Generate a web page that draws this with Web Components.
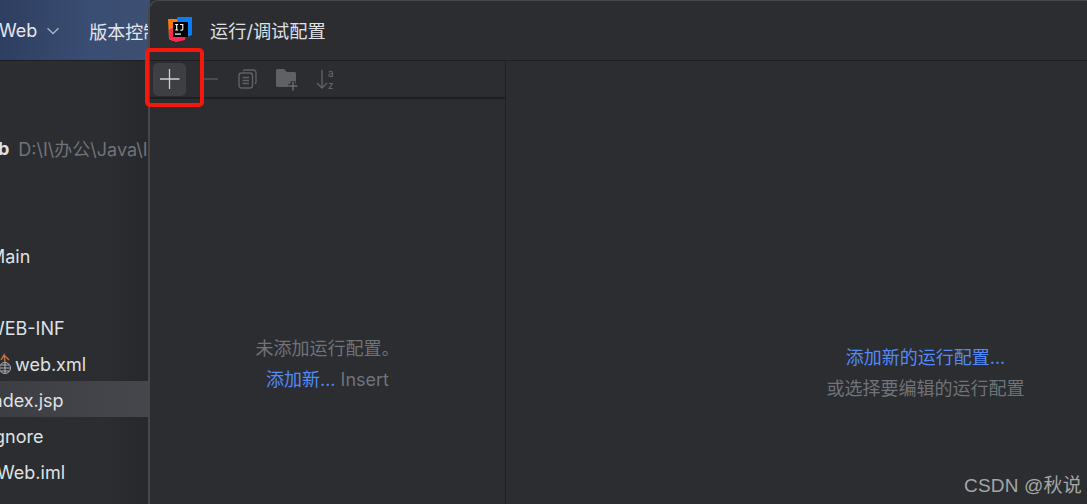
<!DOCTYPE html>
<html lang="zh">
<head>
<meta charset="utf-8">
<style>
html,body{margin:0;padding:0;background:#2b2d30;}
body{width:1087px;height:504px;overflow:hidden;position:relative;font-family:"Inter","Noto Sans CJK SC",sans-serif;}
</style>
</head>
<body>
<ide-back></ide-back>
<run-dialog></run-dialog>
<red-mark></red-mark>
<water-mark>CSDN @秋说</water-mark>
<script>
const FONT='"Inter","Noto Sans CJK SC",sans-serif';
class Base extends HTMLElement{
  constructor(){super();this.attachShadow({mode:'open'}).innerHTML=this.constructor.html;}
}
class IdeRow extends Base{
  static html=`<style>
  :host{display:flex;align-items:center;height:36px;box-sizing:border-box;padding-top:2px;color:#dfe1e5;font:18px ${FONT};white-space:nowrap;overflow:hidden;}
  :host([selected]){background:linear-gradient(90deg,#3c3e43,#45474c);}
  </style><slot></slot>`;
}
class IdeBack extends Base{
  static html=`<style>
  :host{display:flex;flex-direction:column;position:absolute;inset:0;background:#2b2d30;}
  .top{height:61px;flex:none;display:flex;align-items:center;background:linear-gradient(90deg,#2d3e60 0%,#3a4d72 60%,#3d4f72 100%);border-bottom:1px solid #1e1f22;box-sizing:border-box;color:#e4e7ed;font:18px ${FONT};white-space:nowrap;overflow:hidden;width:150px;padding-top:1px;}
  .web{margin-left:-1px;}
  svg.chev{margin-left:9px;flex:none;}
  .vc{margin-left:29px;}
  .side{width:149px;flex:1;padding-top:32px;box-sizing:border-box;display:flex;flex-direction:column;background:linear-gradient(90deg,#2b2d30 70%,#27282b 100%);}
  .path{color:#6f737a;margin-left:9px;}
  b{font-weight:700;margin-left:-2px}
  .m{margin-left:-11px}.wi{margin-left:-13px}.w2{margin-left:-3px}.i{margin-left:-8px}.g{margin-left:-6px}
  .x{margin-left:15px}
  svg.ic{flex:none;margin-right:-16px}
  </style>
  <div class="top"><span class="web">Web</span>
    <svg class="chev" width="14" height="8" viewBox="0 0 14 8"><path d="M1.500 1.200 7 6.600l5.500-5.400" fill="none" stroke="#aab2c4" stroke-width="1.400"/></svg>
    <span class="vc">版本控制</span></div>
  <div class="side">
    <ide-row></ide-row>
    <ide-row><b>b</b><span class="path">D:\\I\\办公\\Java\\IDEA</span></ide-row>
    <ide-row></ide-row><ide-row></ide-row>
    <ide-row><span class="m">Main</span></ide-row>
    <ide-row></ide-row>
    <ide-row><span class="wi">WEB-INF</span></ide-row>
    <ide-row>
      <svg class="ic" width="16" height="24" viewBox="0 0 16 24"><path d="M1 8 4 3l1 7M4 3l5 5" fill="none" stroke="#c9743c" stroke-width="1.400"/><circle cx="5" cy="16" r="6" fill="#2b2d30"/><circle cx="5" cy="16" r="5.500" fill="none" stroke="#aeb1b6"/><path d="M0 16h10M5 11v10M1 13h8M1 19h8" stroke="#aeb1b6"/></svg>
      <span class="x">web.xml</span></ide-row>
    <ide-row selected><span class="i">ndex.jsp</span></ide-row>
    <ide-row><span class="g">gnore</span></ide-row>
    <ide-row><span class="w2">Web.iml</span></ide-row>
  </div>`;
}
class RunDialog extends Base{
  static html=`<style>
  :host{display:flex;flex-direction:column;position:absolute;left:148px;top:0;right:0;bottom:0;background:#2b2d30;border-left:2px solid #45474b;border-top:1px solid #45474b;border-top-left-radius:10px;box-sizing:border-box;color:#dfe1e5;font:18px ${FONT};}
  .title{height:60px;flex:none;display:flex;align-items:center;gap:18px;padding-left:18px;border-bottom:1px solid #1e1f22;box-sizing:border-box;}
  .title svg{margin-top:-3px}
  .title span{margin-top:-2px;font-size:18.200px}
  .body{flex:1;display:flex;min-height:0;}
  .left{width:355px;flex:none;border-right:1px solid #1e1f22;display:flex;flex-direction:column;}
  .tools{height:38px;flex:none;box-sizing:border-box;border-bottom:2px solid #1e1f22;display:flex;align-items:center;padding-left:3px;}
  .btn{width:33px;height:33px;border-radius:5px;display:flex;align-items:center;justify-content:center;flex:none;}
  .btn.on{background:#3d3f43;margin-right:17px;}
  .tools svg{display:block;flex:none}
  .empty{flex:1;display:flex;flex-direction:column;align-items:center;padding-top:234px;color:#6f737a;line-height:31px;}
  .right{flex:1;display:flex;flex-direction:column;align-items:center;padding-top:281px;padding-left:258px;color:#6f737a;line-height:31px;}
  a{color:#548af7;text-decoration:none;}
  </style>
  <div class="title">
    <svg width="24" height="25" viewBox="0 0 24 25">
      <path d="M0 2h11l-1 19-5 3-4-2z" fill="#f97a12"/>
      <path d="M9 0h15v18l-5 2-9-4z" fill="#087cfa"/>
      <path d="M1 13l3-2 14 7-1 5-9 2-7-3z" fill="#fe2857"/>
      <rect x="5" y="5" width="15" height="15" fill="#000"/>
      <rect x="7" y="16.500" width="6" height="1.200" fill="#fff"/>
      <path d="M7.200 7.500h3M8.700 7.500v5.500M7.200 13h3M12 7.500h2.800v4.600c0 1-.7 1.200-2.400 1" fill="none" stroke="#fff" stroke-width="1.100"/>
    </svg>
    <span>运行/调试配置</span>
  </div>
  <div class="body">
    <div class="left">
      <div class="tools">
        <div class="btn on"><svg width="20" height="20" viewBox="0 0 20 20"><path d="M9.500 0v20M-.5 10h20" stroke="#ced0d6" stroke-width="1.300"/></svg></div>
        <svg width="15" height="16" viewBox="0 0 15 16" style="margin-right:20px"><path d="M0 8h15" stroke="#57595d" stroke-width="1.400"/></svg>
        <svg width="19" height="20" viewBox="0 0 19 20" style="margin-right:18px"><rect x="1" y="4" width="13.500" height="15" rx="2.500" fill="none" stroke="#5f6166" stroke-width="1.400"/><path d="M5 2.200C5.500 1.400 6 1 7 1h8c1.700 0 3 1.300 3 3v9c0 1-.4 1.600-1.200 2" fill="none" stroke="#5f6166" stroke-width="1.300"/><path d="M4.500 8.500h6.500M4.500 11.500h6.500M4.500 14.500h6.500" stroke="#5f6166" stroke-width="1.300"/></svg>
        <svg width="24" height="24" viewBox="0 0 24 24" style="margin-right:17px"><path d="M1 3.500C1 2.700 1.700 2 2.500 2H9l3 3h7.500c.8 0 1.500.7 1.500 1.500V20H2.500C1.700 20 1 19.300 1 18.500z" fill="#5f6166"/><path d="M18 14v9.500M13.500 19h9" stroke="#2b2d30" stroke-width="4.500"/><path d="M18 14.500v9M13.500 19h9" stroke="#6a6c71" stroke-width="1.500"/></svg>
        <svg width="20" height="22" viewBox="0 0 20 22"><path d="M6 2v18M1 15l5 5 5-5" fill="none" stroke="#5f6166" stroke-width="1.400"/><text x="12" y="8.500" font-size="9.900" fill="#6a6c71" font-family="Inter">a</text><text x="12" y="20.500" font-size="9.900" fill="#6a6c71" font-family="Inter">z</text></svg>
      </div>
      <div class="empty"><div>未添加运行配置。</div><div><a>添加新...</a> Insert</div></div>
    </div>
    <div class="right"><a>添加新的运行配置...</a><div>或选择要编辑的运行配置</div></div>
  </div>`;
}
class RedMark extends Base{
  static html=`<style>:host{display:block;position:absolute;left:145px;top:48px;width:59px;height:59px;box-sizing:border-box;border:4px solid #f5190d;border-radius:5px;}</style>`;
}
class WaterMark extends Base{
  static html=`<style>:host{display:block;position:absolute;right:5px;bottom:5px;color:#a5a6a7;font:19px "Liberation Sans","Noto Sans CJK SC",sans-serif;letter-spacing:.2px;white-space:nowrap;line-height:26px;}</style><slot></slot>`;
}
customElements.define('ide-row',IdeRow);
customElements.define('ide-back',IdeBack);
customElements.define('run-dialog',RunDialog);
customElements.define('red-mark',RedMark);
customElements.define('water-mark',WaterMark);
</script>
</body>
</html>
